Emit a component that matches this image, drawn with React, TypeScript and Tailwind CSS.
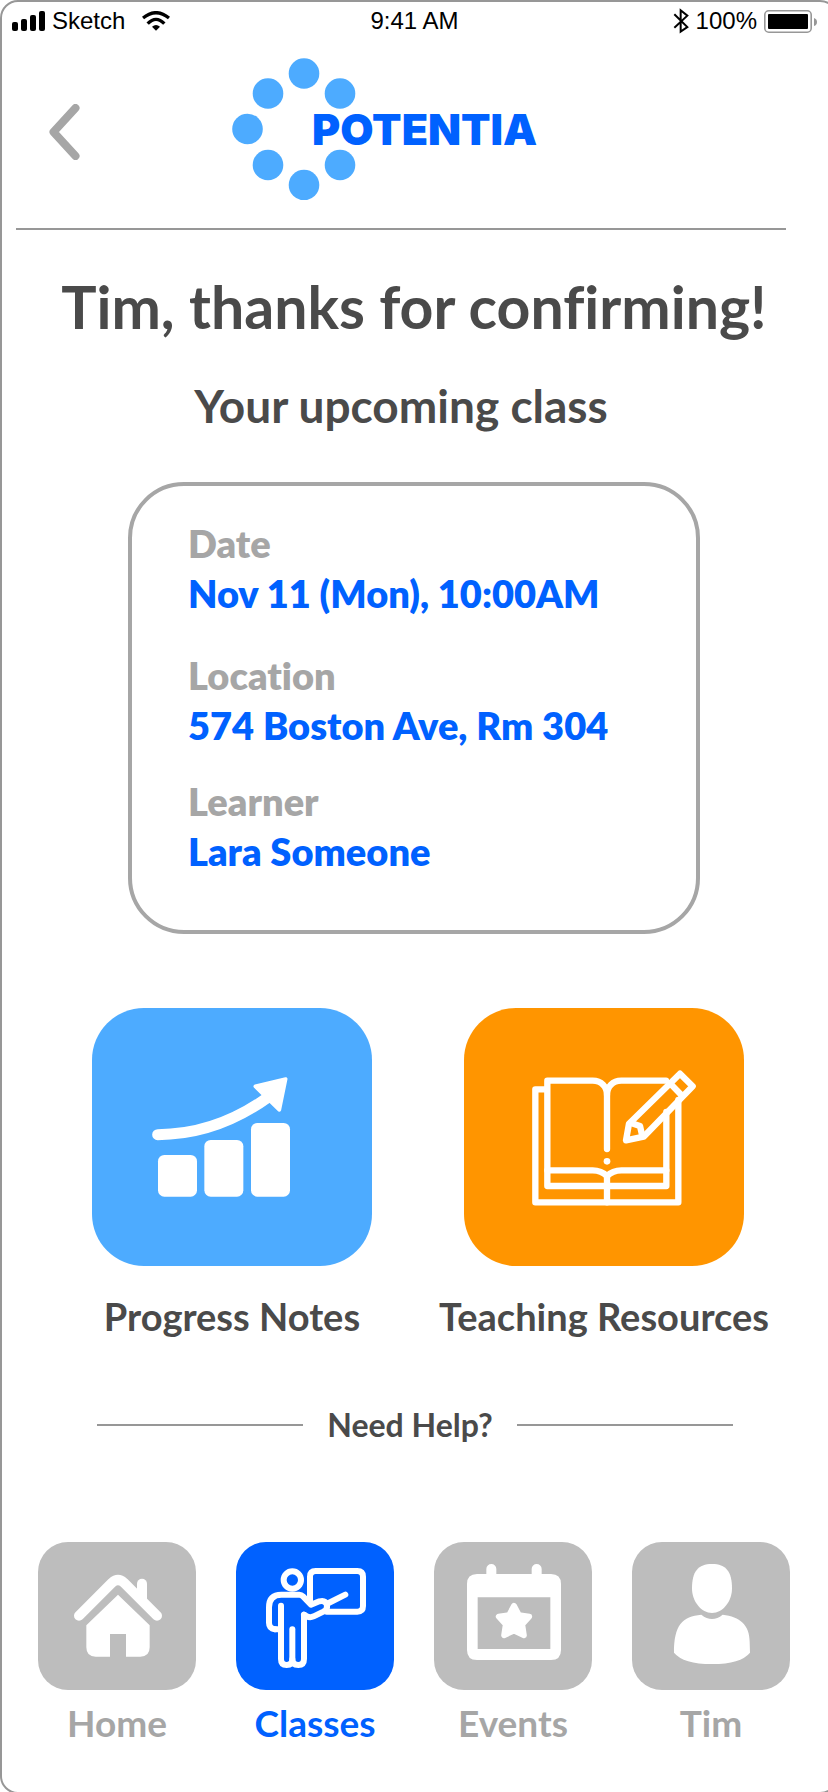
import type { ReactNode } from "react";

function SignalIcon() {
  return (
    <svg className="h-5 w-[33px]" viewBox="0 0 33 20" aria-hidden="true">
      <rect x="0" y="11" width="6" height="9" rx="2" />
      <rect x="9" y="8" width="6" height="12" rx="2" />
      <rect x="18" y="4" width="6" height="16" rx="2" />
      <rect x="27" y="0" width="6" height="20" rx="2" />
    </svg>
  );
}

function WifiIcon() {
  return (
    <svg className="h-5 w-7" viewBox="429 30 84 60" aria-hidden="true">
      <g fill="none" stroke="#000" strokeWidth="10">
        <path d="M432 51 Q471 19 510 51" />
        <path d="M446 68 Q471 42 496 68" />
      </g>
      <path d="M459 77 Q471 67 483 77 L471 89 Z" />
    </svg>
  );
}

function BluetoothIcon() {
  return (
    <svg className="h-[26px] w-4" viewBox="778 21 48 78" aria-hidden="true">
      <path
        d="M782 40 L821 78 L801 92 V28 L821 44 L782 80"
        fill="none"
        stroke="#000"
        strokeWidth="6"
      />
    </svg>
  );
}

function BatteryIcon() {
  return (
    <svg className="h-[23px] w-[53px]" viewBox="0 0 53 23" aria-hidden="true">
      <rect x="0.8" y="0.8" width="46.4" height="21.4" rx="4" fill="none" stroke="#979797" strokeWidth="1.6" />
      <rect x="4" y="4" width="40" height="15" rx="1" />
      <path d="M50 8 Q53 9 53 12 Q53 15 50 16 Z" fill="#979797" />
    </svg>
  );
}

const dots: [number, number][] = [
  [72, 15.5],
  [36, 35.5],
  [108, 35.5],
  [15.5, 71],
  [36, 107],
  [108, 107],
  [72, 127],
];

function Logo() {
  return (
    <div className="mb-[6px] flex items-center">
      <svg className="h-[142px] w-[124px]" viewBox="0 0 124 142" fill="#4dabff" aria-hidden="true">
        {dots.map(([x, y]) => (
          <circle key={`${x}-${y}`} cx={x} cy={y} r="15.3" />
        ))}
      </svg>
      <span className="-ml-11 font-['Inter',sans-serif] text-[43px] leading-[44px] font-black text-[#0061ff]">
        POTENTIA
      </span>
    </div>
  );
}

function ProgressIcon() {
  return (
    <svg className="size-full" viewBox="0 0 840 774" fill="#fff" aria-hidden="true">
      <rect x="198" y="441" width="117" height="125" rx="19" />
      <rect x="337" y="396" width="117" height="170" rx="19" />
      <rect x="477" y="345" width="117" height="221" rx="19" />
      <path d="M197 380 C310 380 420 345 525 270" fill="none" stroke="#fff" strokeWidth="33" strokeLinecap="round" />
      <path d="M490 235 L581 213 L562 306 Z" stroke="#fff" strokeWidth="11" strokeLinejoin="round" />
    </svg>
  );
}

function BookIcon() {
  return (
    <svg
      className="size-full"
      viewBox="0 0 840 774"
      fill="none"
      stroke="#fff"
      strokeWidth="19"
      strokeLinecap="round"
      strokeLinejoin="round"
      aria-hidden="true"
    >
      <path d="M243 244 H214 V583 H643 V276" />
      <path d="M607 312 V534 H250 V218 H386 C412 218 429 236 429 260 V423" />
      <path d="M429 260 C429 236 446 218 472 218 H606" />
      <path d="M250 487 H386 Q412 487 429 504 Q446 487 472 487 H607" />
      <path d="M429 504 V583" />
      <circle cx="429" cy="460" r="10" fill="#fff" stroke="none" />
      <path d="M648 197 L686 235 L539 386 L486 397 L495 347 Z" />
      <path d="M619 227 L655 264" />
      <path d="M503 346 L528 354 L534 380" />
    </svg>
  );
}

function HomeIcon() {
  return (
    <svg className="size-full" viewBox="114 66 474 444" fill="#fff" aria-hidden="true">
      <g fill="none" stroke="#fff" strokeWidth="30" strokeLinecap="round">
        <path d="M237 287 L336 188 Q354 172 372 188 L471 287" />
        <path d="M426 191 V238" />
      </g>
      <path d="M354 224 L449 316 V382 Q449 410 421 410 H378 V342 H330 V410 H287 Q259 410 259 382 V316 Z" />
    </svg>
  );
}

function TeacherIcon() {
  return (
    <svg
      className="size-full"
      viewBox="708 66 474 444"
      fill="none"
      stroke="#fff"
      strokeWidth="18"
      strokeLinecap="round"
      strokeLinejoin="round"
      aria-hidden="true"
    >
      <circle cx="877" cy="180" r="26" />
      <path d="M930 245 V170 Q930 153 947 153 H1072 Q1089 153 1089 170 V258 Q1089 275 1072 275 H980" />
      <path d="M980 252 L1036 224" />
      <path d="M825 328 Q807 325 807 308 V262 Q807 224 844 224 H898 Q904 224 909 229 L933 254 L958 244 Q976 239 981 255 Q983 268 970 275 L941 289 Q930 294 921 289 L912 284" />
      <path d="M825 328 H838" />
      <path d="M843 257 V417 Q843 435 860 435 Q877 435 877 418 Q877 435 895 435 Q912 435 912 417 V284" />
      <path d="M877 328 V420" />
    </svg>
  );
}

function CalendarIcon() {
  return (
    <svg className="size-full" viewBox="60 66 474 444" fill="#fff" aria-hidden="true">
      <path
        fillRule="evenodd"
        d="M189 162 H411 Q441 162 441 192 V390 Q441 420 411 420 H189 Q159 420 159 390 V192 Q159 162 189 162 Z M191 232 V387 H409 V232 Z"
      />
      <path d="M232 147 V175 M368 147 V175" stroke="#fff" strokeWidth="30" strokeLinecap="round" />
      <path
        d="M300 257 L315 285 L346 290 L325 313 L330 346 L300 332 L270 346 L275 313 L254 290 L285 285 Z"
        stroke="#fff"
        strokeWidth="17"
        strokeLinejoin="round"
      />
    </svg>
  );
}

function PersonIcon() {
  return (
    <svg className="size-full" viewBox="654 66 474 444" fill="#fff" aria-hidden="true">
      <path d="M894 132 C936 132 954 155 954 205 C954 245 926 279 894 279 C862 279 834 245 834 205 C834 155 852 132 894 132 Z" />
      <path d="M862 284 Q894 310 926 284 C978 290 1007 315 1007 365 L1008 398 Q980 432 894 432 Q808 432 780 398 C780 315 805 289 862 284 Z" />
    </svg>
  );
}

function Detail({ label, value, className }: { label: string; value: string; className?: string }) {
  return (
    <div className={className}>
      <dt className="text-[#a6a6a6]">{label}</dt>
      <dd className="text-[#0061ff]">{value}</dd>
    </div>
  );
}

function ActionTile({ label, color, children }: { label: string; color: string; children: ReactNode }) {
  return (
    <button type="button" className="flex w-[280px] flex-col items-center">
      <span className={`block h-[258px] w-full rounded-[52px] ${color}`}>{children}</span>
      <span className="mt-[25px] text-[38px] leading-[50px] font-bold whitespace-nowrap text-[#4a4a4a]">{label}</span>
    </button>
  );
}

function NavItem({ label, active = false, children }: { label: string; active?: boolean; children: ReactNode }) {
  return (
    <a href="#" className="flex w-[158px] flex-col items-center" aria-current={active ? "page" : undefined}>
      <span className={`block h-[148px] w-full rounded-[30px] ${active ? "bg-[#0061ff]" : "bg-[#bdbdbd]"}`}>
        {children}
      </span>
      <span
        className={`mt-2 text-[37px] leading-[50px] font-bold ${active ? "text-[#0061ff]" : "text-[#a6a6a6]"}`}
      >
        {label}
      </span>
    </a>
  );
}

export default function App() {
  return (
    <div className="flex min-h-screen overflow-hidden bg-white font-['Lato',sans-serif] [font-variant-ligatures:none]">
      <div className="-mr-2.5 -mb-0.5 flex flex-1 flex-col rounded-[18px] border-2 border-[#979797] pr-2.5">
        <div className="grid h-[38px] grid-cols-[1fr_auto_1fr] items-center pr-[9px] pl-[10px] font-['Liberation_Sans',sans-serif] text-2xl leading-7">
          <div className="flex items-center">
            <SignalIcon />
            <span className="mr-[17px] ml-[7px]">Sketch</span>
            <WifiIcon />
          </div>
          <span>9:41 AM</span>
          <div className="flex items-center justify-end">
            <BluetoothIcon />
            <span className="mx-[7px]">100%</span>
            <BatteryIcon />
          </div>
        </div>

        <header className="mr-[40px] ml-[14px] flex h-[190px] items-center border-b-2 border-[#979797] pb-1 pl-[33px]">
          <button type="button" aria-label="Back" className="mr-[152px]">
            <svg className="h-14 w-[31px]" viewBox="0 0 31 56" fill="none" aria-hidden="true">
              <path d="M26.5 4 L4.5 28 L26.5 52" stroke="#a6a6a6" strokeWidth="8" strokeLinecap="round" strokeLinejoin="round" />
            </svg>
          </button>
          <Logo />
        </header>

        <main>
          <h1 className="mt-[41px] text-center text-[59px] leading-[72px] font-bold text-[#4a4a4a]">
            Tim, thanks for confirming!
          </h1>
          <h2 className="mt-[35px] pr-[26px] text-center text-[46px] leading-[56px] font-bold text-[#4a4a4a]">
            Your upcoming class
          </h2>

          <dl className="mx-auto mt-12 w-[572px] max-w-full rounded-[56px] border-4 border-[#a6a6a6] pt-8 pb-[54px] pl-14 text-[38px] leading-[50px] font-extrabold">
            <Detail label="Date" value="Nov 11 (Mon), 10:00AM" />
            <Detail className="mt-8" label="Location" value="574 Boston Ave, Rm 304" />
            <Detail className="mt-[26px]" label="Learner" value="Lara Someone" />
          </dl>

          <div className="mt-[74px] flex justify-center gap-[92px] pl-2">
            <ActionTile label="Progress Notes" color="bg-[#4dabff]">
              <ProgressIcon />
            </ActionTile>
            <ActionTile label="Teaching Resources" color="bg-[#ff9500]">
              <BookIcon />
            </ActionTile>
          </div>

          <div className="mr-[93px] ml-[95px] mt-[64px] flex items-center gap-6">
            <span className="h-0.5 flex-[205] bg-[#979797]" />
            <a href="#" className="text-[32px] leading-10 font-bold text-[#4a4a4a]">
              Need Help?
            </a>
            <span className="h-0.5 flex-[215] bg-[#979797]" />
          </div>
        </main>

        <nav className="mt-[97px] flex justify-center gap-10 pb-9" aria-label="Main">
          <NavItem label="Home">
            <HomeIcon />
          </NavItem>
          <NavItem label="Classes" active>
            <TeacherIcon />
          </NavItem>
          <NavItem label="Events">
            <CalendarIcon />
          </NavItem>
          <NavItem label="Tim">
            <PersonIcon />
          </NavItem>
        </nav>
      </div>
    </div>
  );
}
